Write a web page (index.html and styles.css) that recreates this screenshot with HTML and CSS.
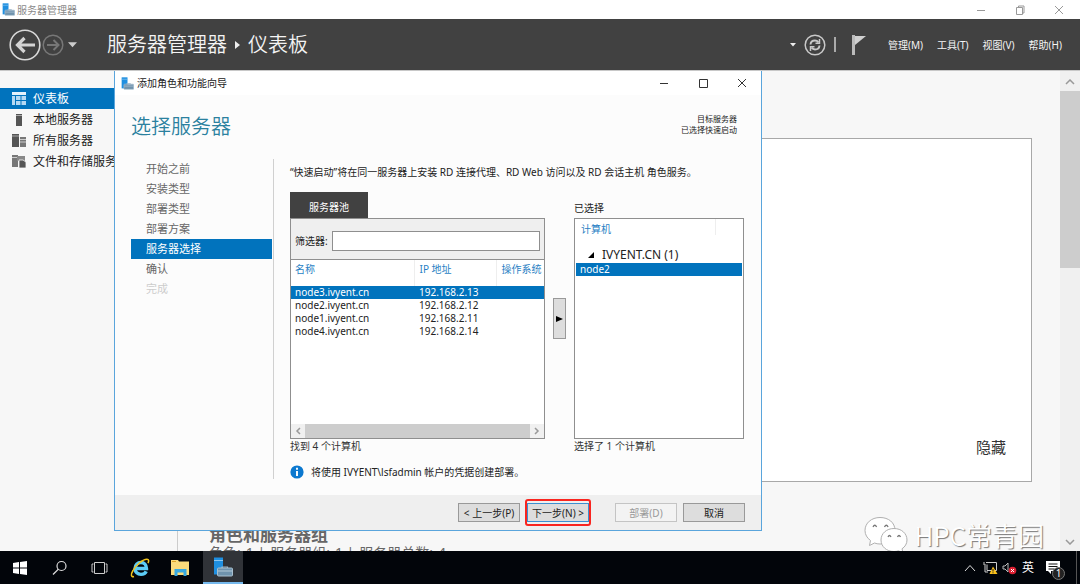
FILE: index.html
```html
<!DOCTYPE html>
<html lang="zh-CN">
<head>
<meta charset="utf-8">
<title>服务器管理器</title>
<link rel="stylesheet" href="styles.css">
</head>
<body>
<svg class="defs" aria-hidden="true">
  <symbol id="server-box" viewBox="0 0 20 19">
    <path d="M1 0h9v17H1z" fill="#1f8fe0"/>
    <path d="M1 3h9" stroke="#8cc8f2" stroke-width="1"/>
    <path d="M9 10.500V9.500h5.500v1" fill="none" stroke="#9fb6c6" stroke-width="1.200"/>
    <rect x="4.500" y="10.500" width="15" height="8" rx="1" fill="#6f93ad" stroke="#a9c0cf"/>
    <path d="M5 13.500h14" stroke="#c4d5e0" stroke-width=".8"/>
  </symbol>
  <symbol id="close" viewBox="0 0 10 10"><path d="M1 1l8 8M9 1l-8 8"/></symbol>
</svg>

<header class="titlebar">
  <svg class="app-icon"><use href="#server-box"/></svg>
  <span class="titlebar-name">服务器管理器</span>
  <div class="window-buttons">
    <button aria-label="最小化"><svg viewBox="0 0 10 10"><path d="M1 5.500h8"/></svg></button>
    <button aria-label="还原"><svg viewBox="0 0 10 10"><path d="M1.500 2.500h6v7h-6zM3.500 2.500v-1.500h5.500v7h-1.500"/></svg></button>
    <button aria-label="关闭"><svg><use href="#close"/></svg></button>
  </div>
</header>

<div class="banner">
  <button class="back" aria-label="后退"><svg viewBox="0 0 32 32"><circle cx="16" cy="16" r="14.800" fill="none" stroke="#d9d9d9" stroke-width="1.600"/><path d="M26 16H9M15.500 9l-7 7 7 7" fill="none" stroke="#d4d4d4" stroke-width="3.200"/></svg></button>
  <button class="forward" aria-label="前进"><svg viewBox="0 0 22 22"><circle cx="11" cy="11" r="9.800" fill="none" stroke="#777" stroke-width="1.500"/><path d="M5 11h11M11.500 6l5 5-5 5" fill="none" stroke="#777" stroke-width="2"/></svg></button>
  <button class="history" aria-label="历史"><svg viewBox="0 0 10 6"><path d="M0 0h10L5 5.500z" fill="#ccc"/></svg></button>
  <h1 class="crumbs"><span>服务器管理器</span><svg viewBox="0 0 5 8"><path d="M0 0l5 4-5 4z" fill="#eee"/></svg><span>仪表板</span></h1>
  <div class="banner-tools">
    <button class="small-drop" aria-label="更多"><svg viewBox="0 0 6 4"><path d="M0 0h6L3 3.500z" fill="#eee"/></svg></button>
    <button class="refresh" aria-label="刷新"><svg viewBox="0 0 22 22" fill="none" stroke="#c8c8c8"><circle cx="11" cy="11" r="9.800" stroke-width="1.500"/><path d="M6.500 10.500q.3-4 4.500-4 2 0 3.500 1.800M15.500 11.500q-.3 4-4.500 4-2 0-3.500-1.800" stroke-width="1.900"/><path d="M15.500 5v4.300h-4M6.500 17v-4.300h4" stroke-width="1.500"/></svg></button>
    <span class="tool-line"></span>
    <button class="flag" aria-label="通知"><svg viewBox="0 0 14 20"><path d="M0 0h3v20H0z" fill="#bbb"/><path d="M3 1h11L3 10z" fill="#d0d0d0"/></svg></button>
  </div>
  <nav class="menu">
    <button>管理(M)</button>
    <button>工具(T)</button>
    <button>视图(V)</button>
    <button>帮助(H)</button>
  </nav>
</div>

<main class="workspace">
  <nav class="sidebar">
    <a href="#" class="selected"><svg viewBox="0 0 14 14"><path d="M0 0h14v3H0z" fill="#e4f1fb"/><path d="M0 4h3v9H0zM4 4h4.500v4H4zM9.500 4H14v4H9.500zM4 9h4.500v4H4zM9.500 9H14v4H9.500z" fill="#b5d9f3"/></svg>仪表板</a>
    <a href="#"><svg viewBox="0 0 14 14"><path d="M4 1h6v12H4z" fill="#555"/><path d="M4 2.500h6" stroke="#aaa"/></svg>本地服务器</a>
    <a href="#"><svg viewBox="0 0 14 14"><path d="M0 0h7v13H0z" fill="#555"/><path d="M0 2h7" stroke="#aaa"/><path d="M8 3h6v10H8z" fill="#777"/><path d="M8 5.500h6M8 8h6" stroke="#ccc"/></svg>所有服务器</a>
    <a href="#"><svg viewBox="0 0 14 14"><path d="M0 0h6v12H0z" fill="#777"/><path d="M0 2.500h6" stroke="#ccc"/><path d="M5 1h8v5H5z" fill="#888"/><path d="M7 5h4l3 2v6H7z" fill="#555" stroke="#f7f7f7" stroke-width=".8"/></svg>文件和存储服务</a>
  </nav>
  <div class="dashboard">
    <section class="welcome"><button class="hide">隐藏</button></section>
    <section class="groups">
      <h2>角色和服务器组</h2>
      <p><span>角色:</span><span>1 |</span><span>服务器组:</span><span>1 |</span><span>服务器总数:</span><span>4</span></p>
    </section>
  </div>
  <div class="vscroll">
    <svg viewBox="0 0 10 6"><path d="M1 5l4-4 4 4"/></svg>
    <span class="vthumb"></span>
    <svg viewBox="0 0 10 6"><path d="M1 1l4 4 4-4"/></svg>
  </div>

  <section class="wizard" role="dialog" aria-labelledby="wizard-name">
    <header class="wizard-bar">
      <svg class="app-icon"><use href="#server-box"/></svg>
      <span id="wizard-name">添加角色和功能向导</span>
      <div class="window-buttons">
        <button aria-label="最小化"><svg viewBox="0 0 10 10"><path d="M1 5.500h8"/></svg></button>
        <button aria-label="最大化"><svg viewBox="0 0 10 10"><path d="M1.500 1.500h8v8h-8z"/></svg></button>
        <button aria-label="关闭"><svg><use href="#close"/></svg></button>
      </div>
    </header>
    <div class="wizard-head">
      <h2>选择服务器</h2>
      <p>目标服务器<br>已选择快速启动</p>
    </div>
    <div class="wizard-body">
      <nav class="steps">
        <a href="#">开始之前</a>
        <a href="#">安装类型</a>
        <a href="#">部署类型</a>
        <a href="#">部署方案</a>
        <a href="#" class="selected">服务器选择</a>
        <a href="#">确认</a>
        <a class="disabled">完成</a>
      </nav>
      <div class="step-content">
        <p class="intro">“快速启动”将在同一服务器上安装 RD 连接代理、RD Web 访问以及 RD 会话主机 角色服务。</p>
        <div class="picker">
          <div class="pool">
            <button class="tab">服务器池</button>
            <div class="pool-box">
              <div class="filter"><label for="filter">筛选器:</label><input id="filter" type="text"></div>
              <table>
                <colgroup><col class="col-name"><col class="col-ip"><col></colgroup>
                <thead><tr><th>名称</th><th>IP 地址</th><th>操作系统</th></tr></thead>
                <tbody>
                  <tr class="selected"><td>node3.ivyent.cn</td><td>192.168.2.13</td><td></td></tr>
                  <tr><td>node2.ivyent.cn</td><td>192.168.2.12</td><td></td></tr>
                  <tr><td>node1.ivyent.cn</td><td>192.168.2.11</td><td></td></tr>
                  <tr><td>node4.ivyent.cn</td><td>192.168.2.14</td><td></td></tr>
                </tbody>
              </table>
              <div class="hscroll">
                <svg viewBox="0 0 6 8"><path d="M5 1L2 4l3 3"/></svg>
                <span class="hthumb"></span>
                <svg viewBox="0 0 6 8"><path d="M1 1l3 3-3 3"/></svg>
              </div>
            </div>
            <p class="count">找到 4 个计算机</p>
          </div>
          <button class="move" aria-label="添加"><svg viewBox="0 0 7 8"><path d="M0 1l7 3-7 3z"/></svg></button>
          <div class="chosen">
            <p class="chosen-label">已选择</p>
            <div class="chosen-box">
              <div class="chosen-head"><span>计算机</span></div>
              <div class="domain"><svg viewBox="0 0 6 6"><path d="M6 0v6H0z"/></svg>IVYENT.CN (1)</div>
              <div class="node selected">node2</div>
            </div>
            <p class="count">选择了 1 个计算机</p>
          </div>
        </div>
        <p class="info"><svg viewBox="0 0 14 14"><circle cx="7" cy="7" r="6.600" fill="#0b78cf"/><path d="M7 6v5M7 2.800v1.900" stroke="#fff" stroke-width="1.900"/></svg>将使用 IVYENT\lsfadmin 帐户的凭据创建部署。</p>
      </div>
    </div>
    <footer class="wizard-foot">
      <button>&lt; 上一步(P)</button>
      <span class="marked"><button class="primary">下一步(N) &gt;</button></span>
      <button class="deploy" disabled>部署(D)</button>
      <button>取消</button>
    </footer>
  </section>

  <div class="watermark">
    <svg viewBox="0 0 44 36">
      <g fill="#fff" stroke="#b0b0b0" stroke-width="1">
        <path d="M16 1C7.500 1 1 6.500 1 14c0 4 2 7.500 5.500 10L5.500 29l5-2.500q2.500 1 5.500 1C25 27.500 31 22 31 14S24.500 1 16 1z"/>
        <path d="M30 12c-7.500 0-13 5-13 11.500S22.500 35 30 35q2.500 0 4.500-.7l4.500 2-1-4c3-2 5-5 5-8.800C43 17 37.500 12 30 12z"/>
      </g>
      <g fill="none" stroke="#777" stroke-width="1.300">
        <path d="M9 10.500q1.800-3.500 3.600 0M20.500 10.500q1.800-3.500 3.600 0M24 20.500q1.500-3 3 0M33.500 20.500q1.500-3 3 0"/>
      </g>
    </svg>
    <span>HPC常青园</span>
  </div>
</main>

<footer class="taskbar">
  <button aria-label="开始"><svg viewBox="0 0 20 20" fill="#fff"><path d="M3 5l6-.900v5.400H3zM10 4l7-1v6.500h-7zM3 10.500h6v5.400L3 15zM10 10.500h7V17l-7-1z"/></svg></button>
  <button aria-label="搜索"><svg viewBox="0 0 20 20" fill="none" stroke="#ddd" stroke-width="1.200"><circle cx="11.500" cy="8" r="4.500"/><path d="M8.300 11.300L3 16.500"/></svg></button>
  <button aria-label="任务视图"><svg viewBox="0 0 20 20" fill="none" stroke="#ccc"><path d="M4.500 4.500h10v11h-10zM3.500 6H2v8h1.500M15.500 6H17v8h-1.500"/></svg></button>
  <button aria-label="浏览器"><svg viewBox="0 0 20 20" fill="none"><path d="M5.500 10.500h11c0-3.800-2.300-6-5.600-6s-5.900 2.600-5.900 6c0 3.600 2.600 5.900 6 5.900 2.500 0 4.400-1 5.200-3" stroke="#5cccf5" stroke-width="3.400"/><path d="M4 18.500c-3 .8-3.500-1.800-1-6C6 7 13 1 17 1.200c2 .1 2 2 1 4" stroke="#f2c41c" stroke-width="1.500"/></svg></button>
  <button aria-label="文件资源管理器"><svg viewBox="0 0 20 20"><path d="M1 2h7l1 1.500h10V17H1z" fill="#fbdc7c"/><path d="M2 3.500h4" stroke="#e0a525"/><path d="M4.500 18v-7h12v7h-3v-3.500h-6V18z" fill="#39a9e0"/></svg></button>
  <button class="running" aria-label="服务器管理器"><svg><use href="#server-box"/></svg></button>
  <div class="tray">
    <svg class="tray-up" viewBox="0 0 12 8" fill="none" stroke="#ddd"><path d="M1 7l5-5.500L11 7"/></svg>
    <svg class="tray-net" viewBox="0 0 15 14"><path d="M3 1.500h10.500v8H4v-6M1 1v3h2M2 5v6h3" fill="none" stroke="#ccc"/><path d="M10 5.500l4.500 7.500h-8z" fill="#fcc21b"/><path d="M10 8v2.500M10 11.300v1" stroke="#222"/></svg>
    <svg class="tray-sound" viewBox="0 0 15 14"><path d="M1 5h2l3-3v9L3 8H1z" fill="none" stroke="#bbb"/><circle cx="10.500" cy="9.500" r="3.800" fill="#dc2032"/><path d="M9 8l3 3M12 8l-3 3" stroke="#fff"/></svg>
    <span class="ime">英</span>
    <button class="notes" aria-label="通知"><svg viewBox="0 0 14 13"><path d="M0 0h14v10H5v3l-3-3H0z" fill="#fff"/><path d="M2.500 3h9M2.500 5.500h9M2.500 8h6" stroke="#111"/></svg><span class="badge">1</span></button>
    <span class="peek"></span>
  </div>
</footer>
</body>
</html>
```
FILE: styles.css
```css
* { box-sizing: border-box; }

body {
  margin: 0;
  height: 100vh;
  display: flex;
  flex-direction: column;
  overflow: hidden;
  background: #f7f7f7;
  color: #222;
  font: 10px/14px "Noto Sans", "Noto Sans CJK SC", sans-serif;
}

button {
  margin: 0;
  padding: 0;
  border: 0;
  background: none;
  color: inherit;
  font: inherit;
  white-space: nowrap;
}

h1, h2, p { margin: 0; font-weight: 400; }
a { color: inherit; text-decoration: none; }
svg { display: block; flex: none; }
.defs { display: none; }
.app-icon { width: 13px; height: 13px; }

/* Main window title */
.titlebar {
  flex: none;
  display: flex;
  align-items: center;
  height: 19px;
  padding-left: 2px;
  background: #fff;
  color: #8a8a8a;
}
.titlebar-name { margin-left: 2px; }
.window-buttons { display: flex; margin-left: auto; }
.window-buttons button { width: 39px; display: flex; justify-content: center; }
.window-buttons svg { width: 10px; height: 10px; fill: none; stroke: #999; }
.titlebar .window-buttons { padding-right: 2px; }

/* Dark banner */
.banner {
  flex: none;
  display: flex;
  align-items: center;
  height: 51px;
  padding: 0 18px 0 9px;
  background: #414141;
  color: #f4f4f4;
}
.back svg { width: 32px; height: 32px; }
.forward { margin-left: 1px; }
.forward svg, .refresh svg { width: 22px; height: 22px; }
.history { margin-left: 4px; }
.history svg { width: 9px; height: 6px; }
.crumbs {
  display: flex;
  align-items: center;
  gap: 8px;
  margin-left: 30px;
  font-size: 20px;
  line-height: 28px;
  font-weight: 350;
}
.crumbs svg { width: 5px; height: 8px; }
.banner-tools { display: flex; align-items: center; gap: 8px; margin-left: auto; }
.small-drop svg { width: 6px; height: 4px; }
.tool-line { width: 2px; height: 15px; background: #aaa; }
.flag { margin-left: 8px; }
.flag svg { width: 14px; height: 20px; }
.menu { display: flex; gap: 14px; margin-left: 22px; }

/* Work area */
.workspace {
  position: relative;
  flex: 1;
  min-height: 0;
  display: flex;
  overflow: hidden;
  border-top: 1px solid #c8c8c8;
}
.sidebar {
  flex: none;
  width: 178px;
  padding-top: 17px;
  border-right: 1px solid #ccc;
  font-size: 12px;
}
.sidebar a {
  display: flex;
  align-items: center;
  gap: 7px;
  height: 21px;
  padding-left: 12px;
  white-space: nowrap;
}
.sidebar svg { width: 14px; height: 14px; }
.selected { background: #0173bd; color: #fff; }

.dashboard {
  flex: 1;
  min-width: 0;
  padding: 67px 28px 0 31px;
}
.welcome {
  display: flex;
  align-items: flex-end;
  justify-content: flex-end;
  height: 344px;
  padding: 0 25px 23px;
  border: 1px solid #a8a8a8;
  background: #fff;
  color: #333;
  font-size: 15px;
  line-height: 22px;
}
.groups { padding-top: 42px; color: #666; white-space: nowrap; }
.groups h2 { font-size: 17px; line-height: 22px; font-weight: 700; }
.groups p { display: flex; gap: 5px; font-size: 14px; line-height: 14px; }

.vscroll {
  flex: none;
  display: flex;
  flex-direction: column;
  align-items: center;
  width: 20px;
  padding: 8px 0 6px;
  background: #f0f0f0;
}
.vscroll svg, .hscroll svg { fill: none; stroke: #999; stroke-width: 1.500; }
.vscroll svg { width: 10px; height: 6px; }
.vthumb { width: 100%; height: 38%; margin: 6px 0 auto; background: #cdcdcd; }

/* Wizard window floating over the dashboard */
.wizard {
  position: absolute;
  top: -1px;
  left: 114px;
  right: 318px;
  bottom: 20px;
  display: flex;
  flex-direction: column;
  border: 1px solid #5aa5dc;
  background: #fcfcfc;
}
.wizard-bar {
  flex: none;
  display: flex;
  align-items: center;
  height: 24px;
  padding-left: 6px;
  background: #fff;
}
#wizard-name { margin-left: 3px; }
.wizard-bar .window-buttons svg { stroke: #333; }
.wizard-head {
  display: flex;
  justify-content: space-between;
  height: 64px;
  padding: 18px 24px 0 16px;
}
.wizard-head h2 { font-size: 20px; line-height: 28px; font-weight: 350; color: #2b819f; }
.wizard-head p { font-size: 8px; line-height: 11px; text-align: right; }

.wizard-body { flex: 1; min-height: 0; display: flex; padding: 0 17px 0 16px; }
.steps {
  flex: none;
  width: 143px;
  margin-bottom: 16px;
  padding-right: 1px;
  border-right: 1px solid #d0d0d0;
  font-size: 11px;
  color: #666;
}
.steps a { display: block; padding-left: 15px; line-height: 20px; }
.steps .selected { color: #fff; }
.steps .disabled { color: #ccc; }

.step-content {
  flex: 1;
  min-width: 0;
  display: flex;
  flex-direction: column;
  padding: 6px 0 16px 16px;
}
.intro { margin-bottom: 13px; white-space: nowrap; }
.picker {
  flex: 1;
  display: grid;
  grid-template-columns: 3fr 13px 2fr;
  column-gap: 8px;
}
.pool, .chosen { display: flex; flex-direction: column; min-width: 0; }
.tab {
  align-self: flex-start;
  height: 26px;
  padding: 4px 19px 0;
  background: #414141;
  color: #fff;
}
.pool-box, .chosen-box {
  flex: 1;
  display: flex;
  flex-direction: column;
  border: 1px solid #8f8f8f;
  background: #fff;
}
.filter {
  display: flex;
  align-items: center;
  gap: 4px;
  height: 41px;
  padding: 3px 4px 0;
  border-bottom: 1px solid #8f8f8f;
  background: #efefef;
}
.filter input {
  flex: 1;
  min-width: 0;
  height: 20px;
  border: 1px solid #8f8f8f;
  background: #fff;
  font: inherit;
}
table { width: 100%; table-layout: fixed; border-collapse: collapse; }
.col-name { width: 123px; }
.col-ip { width: 82px; }
th, td { padding: 0 0 0 4px; text-align: left; font-weight: 400; white-space: nowrap; }
th { height: 26px; padding-bottom: 8px; color: #2a7fc4; }
th + th { border-left: 1px solid #eee; }
td { height: 13px; line-height: 13px; }
th + th, td + td { padding-left: 5px; }
.hscroll {
  display: flex;
  align-items: center;
  justify-content: space-between;
  height: 14px;
  margin-top: auto;
  padding: 0 4px;
  background: #f0f0f0;
}
.hscroll svg { width: 6px; height: 8px; }
.hthumb { flex: 1; height: 14px; margin: 0 4px; background: #cdcdcd; }
.count { line-height: 14px; color: #333; }

.move {
  align-self: center;
  display: flex;
  align-items: center;
  justify-content: center;
  height: 41px;
  margin-bottom: 8px;
  border: 1px solid #999;
  background: #ddd;
}
.move svg { width: 7px; height: 8px; }

.chosen-label { height: 26px; padding-top: 9px; }
.chosen-box { padding: 0 1px; }
.chosen-head { display: flex; height: 28px; padding-left: 5px; color: #2a7fc4; }
.chosen-head span { width: 135px; height: 16px; padding-top: 3px; border-right: 1px solid #eee; }
.domain {
  display: flex;
  align-items: center;
  gap: 8px;
  height: 16px;
  padding-left: 12px;
  font-size: 12px;
}
.domain svg { width: 6px; height: 6px; }
.node { padding-left: 4px; line-height: 13px; }

.info { display: flex; align-items: center; gap: 7px; margin-top: 12px; color: #222; }
.info svg { width: 14px; height: 14px; }

.wizard-foot {
  flex: none;
  display: flex;
  align-items: center;
  justify-content: flex-end;
  gap: 6px;
  height: 35px;
  padding-right: 16px;
  background: #efefef;
}
.wizard-foot button {
  width: 62px;
  height: 19px;
  border: 1px solid #999;
  background: #ddd;
  line-height: 16px;
}
.marked {
  display: flex;
  margin: 0 -1px;
  padding: 2px 0;
  border: 2px solid #f9251f;
  border-radius: 3px;
}
.wizard-foot .primary { border-color: #3c8fd0; }
.wizard-foot .deploy { margin-left: 19px; border-color: #c4c4c4; background: #f3f3f3; color: #999; }

/* Account mark over the lower right corner */
.watermark {
  position: absolute;
  right: 36px;
  bottom: -2px;
  display: flex;
  align-items: center;
  gap: 6px;
  color: #fff;
  font-family: "Noto Sans CJK SC", sans-serif;
  font-size: 26px;
  line-height: 34px;
  font-weight: 350;
  text-shadow: 1px 1px 1px #777;
}
.watermark svg { width: 44px; height: 37px; }

/* Taskbar */
.taskbar {
  flex: none;
  display: flex;
  height: 33px;
  background: #02050a;
  color: #fff;
}
.taskbar > button { width: 40px; display: flex; align-items: center; justify-content: center; }
.taskbar svg { width: 20px; height: 20px; }
.taskbar .running { margin-left: 3px; border-bottom: 2px solid #76b9ed; background: #303338; }
.tray { display: flex; align-items: center; gap: 4px; margin-left: auto; padding-right: 3px; }
.tray .tray-up { width: 12px; height: 8px; margin-right: 3px; }
.tray .tray-net, .tray .tray-sound { width: 15px; height: 14px; }
.ime { margin-left: 1px; font-size: 12px; line-height: 16px; }
.notes { position: relative; margin-left: 8px; }
.notes svg { width: 14px; height: 13px; }
.badge {
  position: absolute;
  left: 6px;
  top: 6px;
  width: 13px;
  height: 13px;
  border: 1px solid #777;
  border-radius: 50%;
  background: #222;
  font-size: 10px;
  line-height: 11px;
  text-align: center;
}
.peek { width: 1px; height: 33px; margin-left: 12px; background: #555; }
```
